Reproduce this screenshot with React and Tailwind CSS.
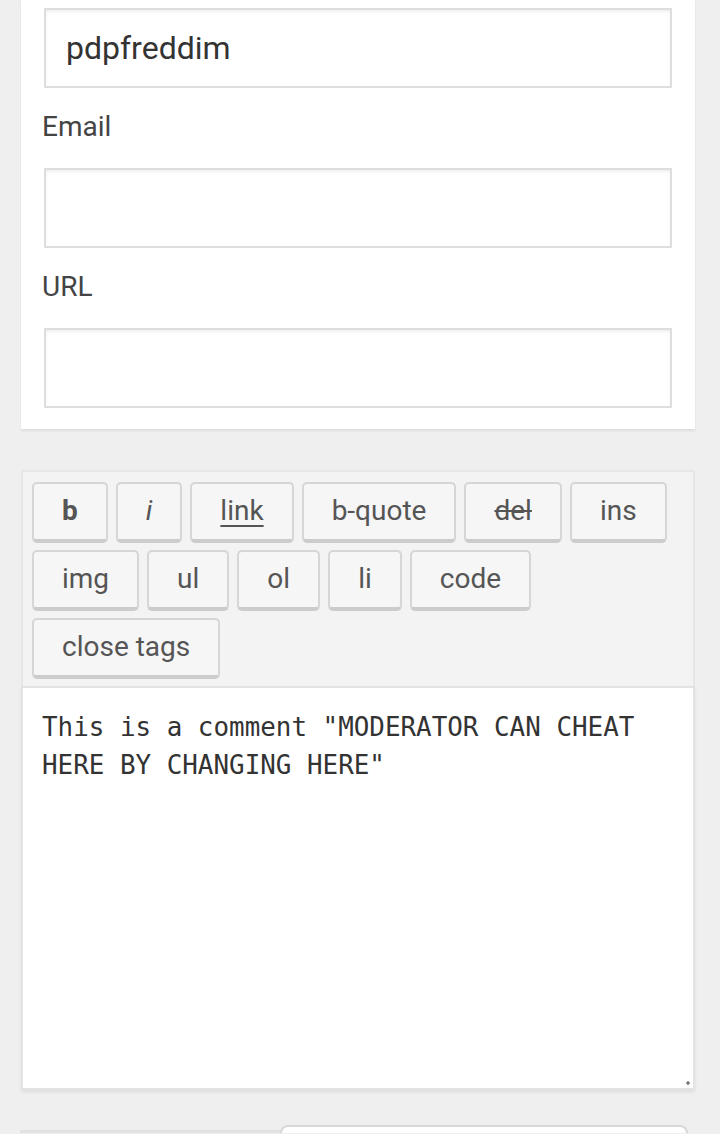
import React from 'react'

const font = { fontFamily: 'Roboto, "Noto Sans", sans-serif' }

function Field({ label, value }) {
  return (
    <div>
      {label && (
        <label className="block text-[28px] leading-[36px] text-[#444] mt-[21px] mb-[23px] -ml-[2px]">
          {label}
        </label>
      )}
      <div className="h-[80px] border-2 border-[#dedede] bg-white shadow-[inset_0_2px_3px_rgba(0,0,0,0.06)] px-[20px] flex items-center text-[32px] text-[#333]">
        {value}
      </div>
    </div>
  )
}

function TagButton({ children, className = '' }) {
  return (
    <button
      type="button"
      className={`h-[61px] px-[28px] pb-[2px] rounded-[5px] border-2 border-[#d6d6d6] border-b-[4px] border-b-[#cccccc] bg-[#f6f6f6] text-[28px] text-[#555] leading-none ${className}`}
    >
      {children}
    </button>
  )
}

export default function App() {
  return (
    <div className="min-h-[1134px] bg-[#efefef] overflow-hidden" style={font}>
      <div className="mx-[21px] w-[674px] bg-white pt-[8px] pb-[21px] px-[23px] shadow-[0_2px_2px_rgba(0,0,0,0.08)]">
        <Field value="pdpfreddim" />
        <Field label="Email" value="" />
        <Field label="URL" value="" />
      </div>

      <div className="mx-[21px] w-[674px] mt-[41px]">
        <div className="bg-[#f3f3f3] border-2 border-[#e6e6e6] border-b-0 pt-[10px] pb-[7px] px-[9px] flex flex-wrap gap-x-[8px] gap-y-[7px]">
          <TagButton className="font-bold">b</TagButton>
          <TagButton className="italic">i</TagButton>
          <TagButton><span className="underline underline-offset-[5px] decoration-2">link</span></TagButton>
          <TagButton>b-quote</TagButton>
          <TagButton><span className="line-through decoration-2">del</span></TagButton>
          <TagButton>ins</TagButton>
          <TagButton>img</TagButton>
          <TagButton>ul</TagButton>
          <TagButton>ol</TagButton>
          <TagButton>li</TagButton>
          <TagButton>code</TagButton>
          <TagButton>close tags</TagButton>
        </div>
        <div className="relative h-[404px] bg-white border-2 border-[#e3e3e3] shadow-[0_2px_3px_rgba(0,0,0,0.08)] pt-[20px] px-[19px]">
          <p
            className="text-[25.9px] leading-[38px] text-[#333] whitespace-pre-wrap"
            style={{ fontFamily: '"DejaVu Sans Mono", "Liberation Mono", monospace' }}
          >
            This is a comment "MODERATOR CAN CHEAT HERE BY CHANGING HERE"
          </p>
          <svg className="absolute right-[2px] bottom-[2px]" width="6" height="6" viewBox="0 0 6 6">
            <path d="M1 3h4M3 1v4" stroke="#555" strokeWidth="1.2" />
          </svg>
        </div>
      </div>

      <div className="mt-[35px] flex items-end mx-[20px]">
        <div className="w-[260px] h-[3px] bg-[#e2e2e2]" />
        <div className="w-[408px] h-[8px] bg-white rounded-t-[8px] border-t-2 border-x-2 border-[#d8d8d8]" />
      </div>
    </div>
  )
}
